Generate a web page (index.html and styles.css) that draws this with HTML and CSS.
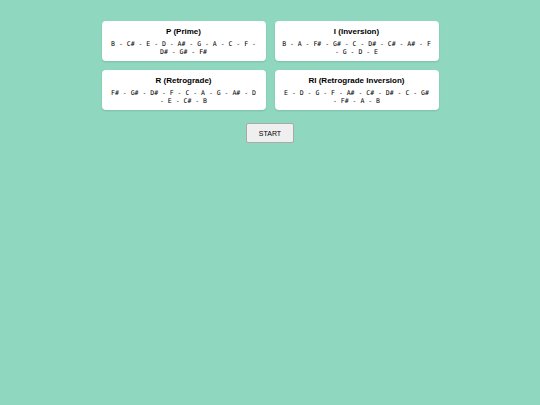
FILE: index.html
```html
<!DOCTYPE html>
<html>
<head>
<meta charset="utf-8">
<link rel="stylesheet" href="styles.css">
</head>
<body>
<div class="app">
  <div class="grid">
    <div class="card">
      <div class="title">P (Prime)</div>
      <div class="seq">B - C# - E - D - A# - G - A - C - F - D# - G# - F#</div>
    </div>
    <div class="card">
      <div class="title">I (Inversion)</div>
      <div class="seq">B - A - F# - G# - C - D# - C# - A# - F - G - D - E</div>
    </div>
    <div class="card">
      <div class="title">R (Retrograde)</div>
      <div class="seq">F# - G# - D# - F - C - A - G - A# - D - E - C# - B</div>
    </div>
    <div class="card">
      <div class="title">RI (Retrograde Inversion)</div>
      <div class="seq">E - D - G - F - A# - C# - D# - C - G# - F# - A - B</div>
    </div>
  </div>
  <button class="start">START</button>
</div>
</body>
</html>
```
FILE: styles.css
```css
html, body {
  margin: 0;
  padding: 0;
  background: #8fd7bf;
  height: 100%;
}
.app {
  display: flex;
  flex-direction: column;
  align-items: center;
  padding-top: 21px;
  font-family: "Liberation Sans", Arial, sans-serif;
}
.grid {
  display: grid;
  grid-template-columns: 164px 164px;
  gap: 9px;
}
.card {
  background: #fff;
  border-radius: 4px;
  box-shadow: 0 1px 2px rgba(0,0,0,0.12);
  padding: 6px 6px 5px;
  height: 40px;
  box-sizing: border-box;
  text-align: center;
}
.title {
  font-weight: bold;
  font-size: 8px;
  line-height: 10px;
  margin-bottom: 3px;
  color: #000;
}
.seq {
  font-family: "DejaVu Sans Mono", monospace;
  font-size: 6.5px;
  line-height: 8px;
  color: #000;
}
.start {
  margin-top: 13px;
  width: 48px;
  height: 20px;
  font-family: "Liberation Sans", Arial, sans-serif;
  font-size: 7px;
  background: #efefef;
  border: 1px solid #a9a9a9;
  border-radius: 2px;
  padding: 0;
  color: #000;
}
```
